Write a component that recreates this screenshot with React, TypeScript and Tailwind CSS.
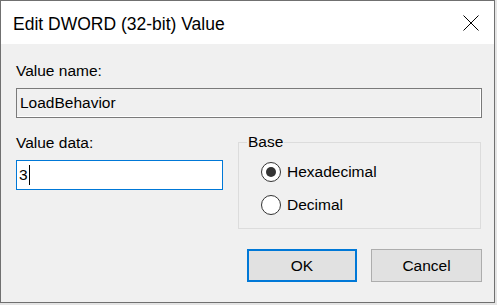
const font = { fontFamily: '"Liberation Sans", Arial, sans-serif' };

function Radio({ label, checked }: { label: string; checked?: boolean }) {
  return (
    <label className="flex items-center h-[20px]">
      <span className="w-[20px] h-[20px] rounded-full border border-[#333333] bg-white flex items-center justify-center shrink-0">
        {checked && <span className="w-[10px] h-[10px] rounded-full bg-[#333333]" />}
      </span>
      <span className="ml-[6px] text-[15.5px] leading-[18px] text-black">{label}</span>
    </label>
  );
}

export default function App() {
  return (
    <div className="w-[497px] h-[305px] bg-[#e4e4e4] overflow-hidden" style={font}>
      <div className="w-[495px] h-[303px] border border-[#707070] bg-[#f0f0f0] flex flex-col">
        {/* Title bar */}
        <div className="h-[43px] bg-white flex items-center justify-between pl-[12px] pr-[15px] shrink-0">
          <span className="text-[17.5px] leading-[20px] text-black pt-[2px]">Edit DWORD (32-bit) Value</span>
          <svg width="16" height="16" viewBox="0 0 16 16" className="mt-[1px]">
            <path d="M0.5 0.5 L15.5 15.5 M15.5 0.5 L0.5 15.5" stroke="#000" strokeWidth="1" fill="none" />
          </svg>
        </div>

        {/* Body */}
        <div className="pl-[15px] pt-[18px] w-[481px] text-black">
          <div className="text-[15.5px] leading-[18px]">Value name:</div>
          <div className="mt-[8px] h-[30px] border border-[#7a7a7a] bg-[#f0f0f0] shadow-[inset_-1px_-1px_0_#ffffff] flex items-center pl-[3px] text-[15.5px] leading-[18px]">
            LoadBehavior
          </div>

          <div className="flex mt-[16px]">
            <div className="w-[207px]">
              <div className="text-[15.5px] leading-[18px]">Value data:</div>
              <div className="mt-[8px] h-[30px] border border-[#0078d7] bg-white flex items-center pl-[2px] text-[15.5px] leading-[18px]">
                <span>3</span>
                <span className="ml-[1px] w-[1px] h-[20px] bg-black" />
              </div>
            </div>
            <fieldset className="ml-[15px] w-[243px] h-[96px] border border-[#dcdcdc] rounded-none -mt-[1px]">
              <legend className="ml-[8px] px-[1px] text-[15.5px] leading-[18px]">Base</legend>
              <div className="flex flex-col gap-[13px] mt-[11px] pl-[22px]">
                <Radio label="Hexadecimal" checked />
                <Radio label="Decimal" />
              </div>
            </fieldset>
          </div>

          <div className="flex justify-end gap-[14px] mt-[20px]">
            <button className="w-[110px] h-[33px] border-2 border-[#0078d7] bg-[#e1e1e1] text-[15.5px] leading-[18px] text-black">
              OK
            </button>
            <button className="w-[111px] h-[33px] border border-[#adadad] bg-[#e1e1e1] text-[15.5px] leading-[18px] text-black">
              Cancel
            </button>
          </div>
        </div>
      </div>
    </div>
  );
}
